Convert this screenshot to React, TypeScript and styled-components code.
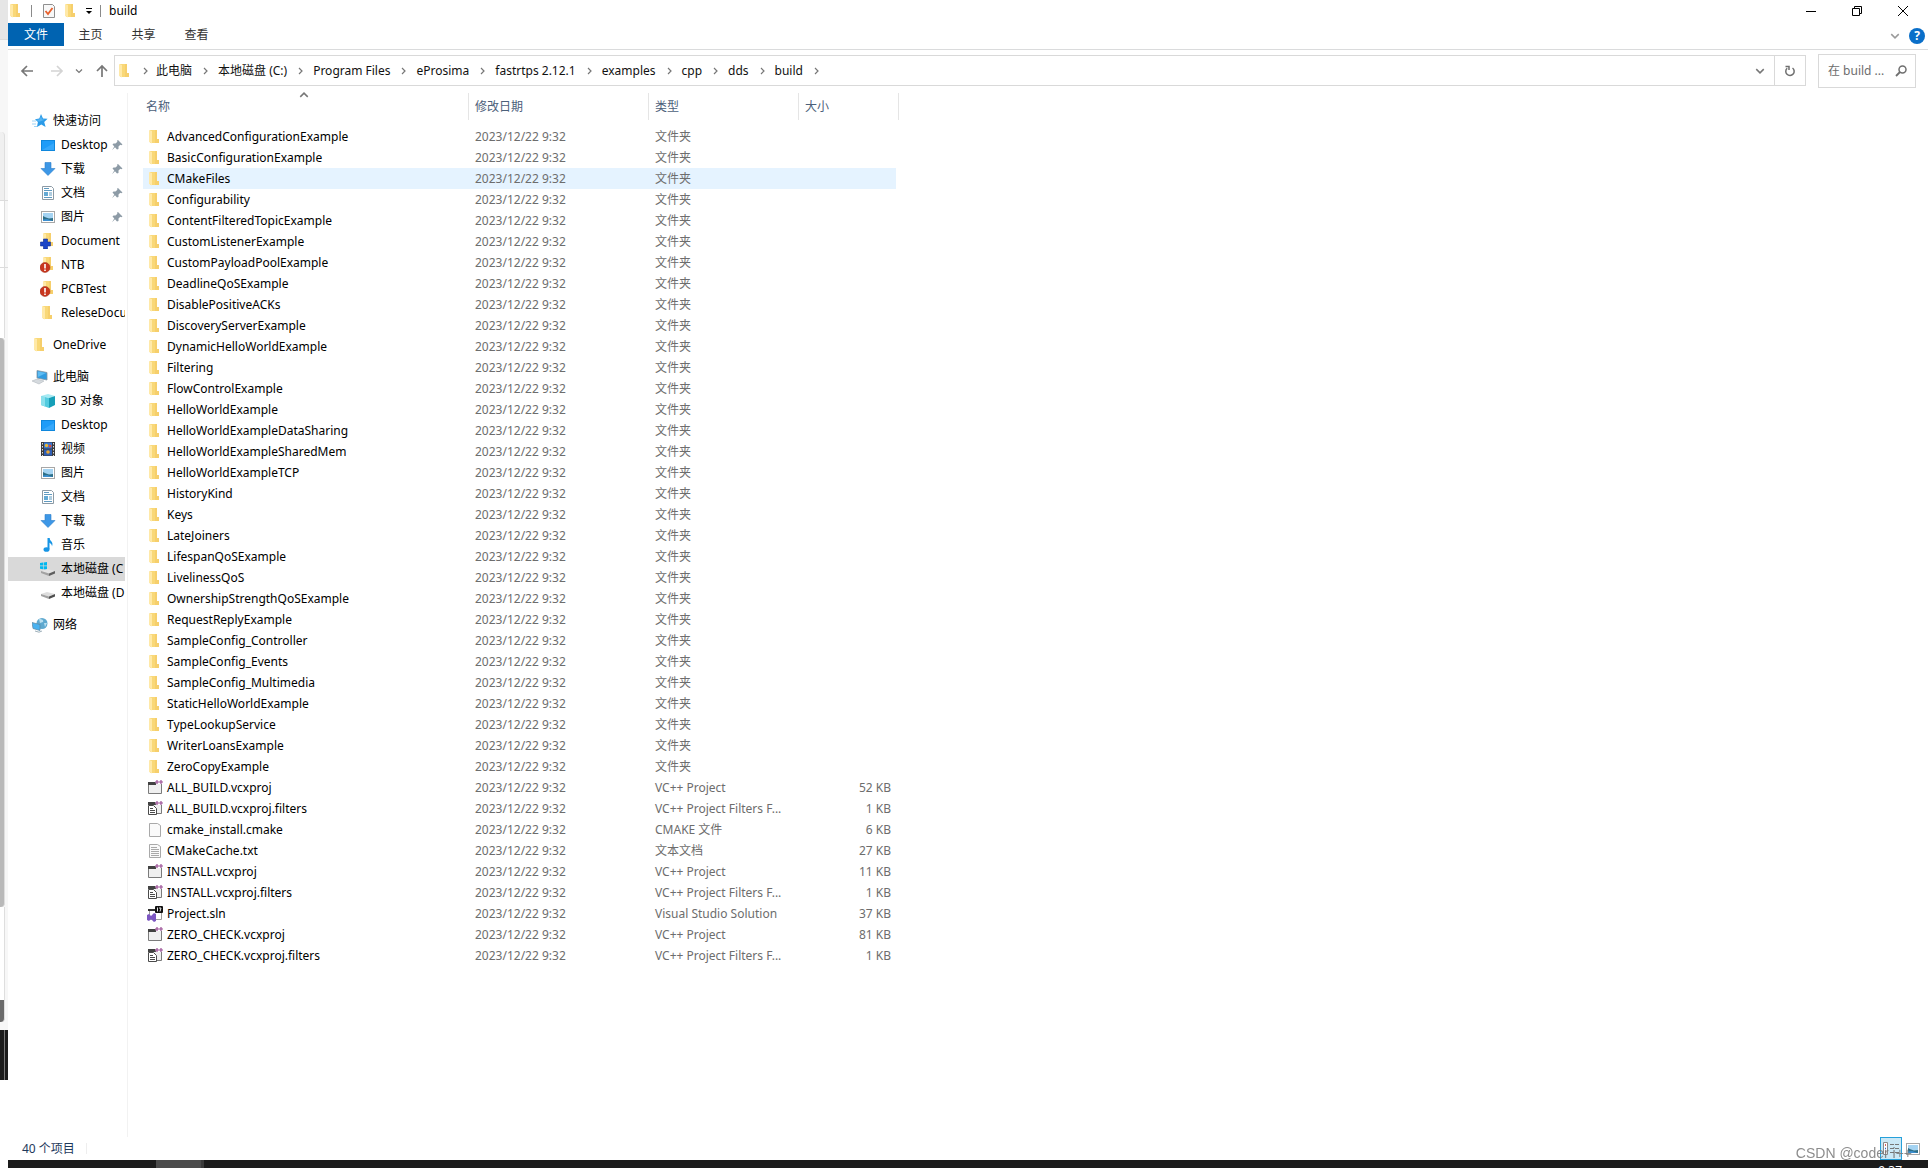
import React from "react";
import styled, { createGlobalStyle } from "styled-components";

const Global = createGlobalStyle`
  * { box-sizing: border-box; }
  body { margin: 0; background: #fff; }
  body, button, input, table {
    font-family: "Noto Sans", "Noto Sans CJK SC", sans-serif;
    font-size: 12px;
    line-height: 16px;
    font-variant-ligatures: none;
  }
  button { border: 0; padding: 0; background: none; color: inherit; }
  svg { display: block; flex: none; }
`;

/* ---------- icons ---------- */

type IconName =
  | "folder" | "star" | "desktop" | "download" | "docs" | "pictures" | "plusFolder"
  | "alertFolder" | "pc" | "cube" | "video" | "music" | "diskC" | "disk" | "network"
  | "vcx" | "filters" | "blank" | "text" | "sln" | "check";

const folderShape = (
  <>
    <path d="M3 1h7v9l2 1v3H3z" fill="#f9d878" />
    <path d="M8 1h2v9h2v4H8z" fill="#f6cf6c" />
    <path d="M2 1l3 1v12.500L2 13z" fill="#ffe9a8" />
  </>
);

const glyphs: Record<IconName, React.ReactNode> = {
  folder: folderShape,
  star: (
    <>
      <path d="M9 1l2 4.600 4.600.2-3.400 3.200 1.400 5L9.300 11.400 5 14l.9-4.900L3 6.200l4.300-.6z" fill="#2b9be8" />
      <path d="M9 3l1 3.300 3 .4-6 2-3-2 3.800-.5z" fill="#54b4f2" />
      <path d="M0 8h4M0 11h4M2 13.500h3" stroke="#9fd4f5" strokeWidth="1" />
    </>
  ),
  desktop: (
    <>
      <rect x="1" y="3" width="14" height="11" fill="#0f87dc" />
      <rect x="2" y="4" width="12" height="9" fill="#1e9cf8" />
      <path d="M2 13L14 6v7z" fill="#36a8fb" />
    </>
  ),
  download: <path d="M5 1.500h6v6h4l-7 7-7-7h4z" fill="#3d97e6" stroke="#2b7dc9" strokeWidth="0.6" />,
  docs: (
    <>
      <path d="M2.500 1.500h9l2 2v11h-11z" fill="#fff" stroke="#8c9aa5" />
      <path d="M4 3.500h5M4 5.500h8M9 8h3M9 10h3M4 12.500h8" stroke="#5f9ac0" />
      <rect x="4" y="7" width="4" height="4" fill="#63a9d4" />
    </>
  ),
  pictures: (
    <>
      <rect x="1.500" y="2.500" width="13" height="11" fill="#fff" stroke="#a7a7a7" />
      <rect x="3" y="4" width="10" height="8" fill="#a4d3f2" />
      <path d="M3 7l3 1.500 3 1 4-.5v3H3z" fill="#2e6f86" />
      <path d="M3 10.500l4-.5 6 2H3z" fill="#3c8fd0" />
    </>
  ),
  plusFolder: (
    <>
      <g transform="translate(1 -1)">{folderShape}</g>
      <path d="M3.500 6h4v3h3v4h-3v3h-4v-3h-3V9h3z" fill="#1c46c8" stroke="#0d2c94" strokeWidth="0.6" />
    </>
  ),
  alertFolder: (
    <>
      <g transform="translate(1 -1)">{folderShape}</g>
      <circle cx="5" cy="10.500" r="5" fill="#c9371f" stroke="#9c2a18" strokeWidth="0.5" />
      <path d="M5 7v4.500M5 12.500v1.500" stroke="#fff" strokeWidth="1.600" />
    </>
  ),
  pc: (
    <>
      <path d="M5 1.500l10 2v7.500L5 9z" fill="#2f9be0" stroke="#8796a1" strokeWidth="0.8" />
      <path d="M6 2.500l8 1.500-8 4z" fill="#5dbcf3" />
      <path d="M0 12l5-2 7 2-5 3z" fill="#d5dade" stroke="#a9b1b7" strokeWidth="0.5" />
    </>
  ),
  cube: (
    <>
      <path d="M1 3l7-2 7 2-6 2z" fill="#a6eaf3" />
      <path d="M1 3l8 2v10l-8-3z" fill="#52cbdf" />
      <path d="M9 5l6-2v9l-6 3z" fill="#169fb8" />
      <path d="M1 3l4 1v9.500L1 12z" fill="#8be0ec" />
    </>
  ),
  video: (
    <>
      <rect x="1" y="1" width="14" height="14" fill="#3b3b3b" />
      <path d="M2.500 2v13M13.500 2v13" stroke="#e0e0e0" strokeDasharray="1.500 1.500" />
      <rect x="4" y="1.500" width="8" height="6" fill="#3579d8" />
      <rect x="4" y="8.500" width="8" height="6" fill="#2f5fb5" />
      <circle cx="6.500" cy="4.500" r="1.700" fill="#e9b93a" />
      <circle cx="10" cy="5" r="1.500" fill="#d74b3b" />
      <circle cx="8" cy="11" r="1.800" fill="#e7a637" />
    </>
  ),
  music: (
    <>
      <path d="M8.500 1v11" stroke="#1795e5" strokeWidth="2" />
      <path d="M8 1h1.500c0 3 4.500 3.500 2.500 8.500 0-2-1.500-3.500-3.500-4z" fill="#1795e5" />
      <ellipse cx="6.500" cy="12.500" rx="3" ry="2.300" fill="#1795e5" />
    </>
  ),
  diskC: (
    <>
      <path d="M0 2l3-.4v3H0zM3.600 1.500L7 1v3.600H3.600zM0 5.200h3v3L0 7.800zM3.600 5.200H7v3.600l-3.400-.5z" fill="#00b7ef" />
      <path d="M1 10l6-2 8 2-6 2.500z" fill="#e3e3e3" />
      <path d="M1 10l8 2.500V15l-8-3z" fill="#a2a2a2" />
      <path d="M9 12.500l6-2.500v2.500L9 15z" fill="#5f5f5f" />
    </>
  ),
  disk: (
    <>
      <path d="M1 9l6-2 8 2-6 2.500z" fill="#dedede" />
      <path d="M1 9l8 2.500V14l-8-3z" fill="#a2a2a2" />
      <path d="M9 11.500L15 9v2.500L9 14z" fill="#4f4f4f" />
    </>
  ),
  network: (
    <>
      <circle cx="10" cy="6.500" r="5.500" fill="#5fa9cf" />
      <path d="M7 2c3 0 5 1 4 3l-3 1zM12 6l3 0-2 4z" fill="#b9dff0" />
      <path d="M0 5.500l8 2v6L1 11.500z" fill="#49b2f0" stroke="#5c87a2" strokeWidth="0.7" />
      <path d="M3 14l4 1.200 3-1.200" stroke="#9fb0ba" fill="none" />
    </>
  ),
  vcx: (
    <>
      <path d="M1.500 2.500h13v11h-13z" fill="#f0f0f0" stroke="#7b7b7b" />
      <path d="M1 2h8v3H1z" fill="#424242" />
      <path d="M8 0h8v4H9z" fill="#fff" />
      <path d="M8 2h4M10 0v4M12 2h4M14 0v4" stroke="#9b4f96" strokeWidth="1.200" />
    </>
  ),
  filters: (
    <>
      <path d="M4.500 2.500h10v10h-10z" fill="#f0f0f0" stroke="#7b7b7b" />
      <path d="M1 1h8v3H1z" fill="#424242" />
      <path d="M8 0h8v4H9z" fill="#fff" />
      <path d="M8 2h4M10 0v4M12 2h4M14 0v4" stroke="#9b4f96" strokeWidth="1.200" />
      <path d="M1.500 4.500h5l3 3v6h-8z" fill="#fff" stroke="#4b4b4b" />
      <path d="M3 7.500h3M3 9.500h5M3 11.500h5" stroke="#4b4b4b" />
    </>
  ),
  blank: <path d="M2.500 1.500h8l3 2v11h-11z" fill="#fafafa" stroke="#a9a9a9" />,
  text: (
    <>
      <path d="M2.500 1.500h8l3 2v11h-11z" fill="#fafafa" stroke="#a9a9a9" />
      <path d="M4 4.500h6M4 6.500h8M4 8.500h8M4 10.500h8M4 12.500h8" stroke="#a9a9a9" />
    </>
  ),
  sln: (
    <>
      <path d="M2.500 3.500h12v10h-12z" fill="#fff" stroke="#9d9d9d" />
      <path d="M1 3h7v2H1z" fill="#333" />
      <rect x="8" y="0" width="8" height="7" rx="1" fill="#111" />
      <path d="M10.500 1.500v4M12 2h2l-1 3.500" stroke="#fff" fill="none" strokeWidth="0.9" />
      <path d="M0 9l2-1 2 2 3-3 2 1v7l-2 1-3-3-2 2-2-1z" fill="#7d57c2" />
    </>
  ),
  check: (
    <>
      <path d="M2.500 1.500h9l2 2v11h-11z" fill="#f8f8f8" stroke="#8f8f8f" />
      <path d="M4.500 8l2.500 3 4.500-6" stroke="#e8602c" strokeWidth="1.800" fill="none" />
    </>
  ),
};

const Icon = ({ name }: { name: IconName }) => (
  <svg width="16" height="16" viewBox="0 0 16 16" aria-hidden="true">{glyphs[name]}</svg>
);

const Chevron = ({ dir, color = "#777", size = 8 }: { dir: "right" | "down" | "up"; color?: string; size?: number }) => {
  const d = { right: "M3 1l3 3-3 3", down: "M1 2.500l3 3 3-3", up: "M1 5.500l3-3 3 3" }[dir];
  return (
    <svg width={size} height={size} viewBox="0 0 8 8" aria-hidden="true">
      <path d={d} stroke={color} strokeWidth="1.200" fill="none" />
    </svg>
  );
};

const Pin = () => (
  <svg width="12" height="12" viewBox="0 0 12 12" aria-hidden="true">
    <path d="M7 1l4.500 4.500-1.200.7-1-.4L7.500 7.500V10L6 10.500 4 8.200 1 11.200 3.300 7.500 1.500 5.500 2.500 4.500h2L6.400 2.700 6 1.800z" fill="#8d9ba6" />
  </svg>
);

/* ---------- desktop shell ---------- */

const Screen = styled.div`
  display: grid;
  grid-template-columns: 8px minmax(0, 1fr);
  min-height: 100vh;
`;

const Behind = styled.div`
  display: flex;
  flex-direction: column;
  background: #fff;
`;

const Slab = styled.div<{ $h: number; $bg: string; $inner?: string; $edge?: string; $top?: boolean; $radius?: string }>`
  height: ${p => p.$h}px;
  background: ${p => p.$bg};
  border-top: ${p => (p.$top ? "1px solid #dcdcdc" : "0")};
  &::before {
    content: "";
    display: ${p => (p.$inner ? "block" : "none")};
    width: 4px;
    height: 100%;
    background: ${p => p.$inner};
    border-right: 1px solid ${p => p.$edge ?? "#dedede"};
    border-radius: ${p => p.$radius ?? "0"};
  }
`;

const Window = styled.main`
  display: flex;
  flex-direction: column;
  min-width: 0;
  background: #fff;
`;

/* ---------- title and ribbon ---------- */

const TitleBar = styled.header`
  display: flex;
  align-items: center;
  height: 23px;
  padding-bottom: 2px;
`;

const QuickTools = styled.div`
  display: flex;
  align-items: center;
  gap: 6px;
`;

const Rule = styled.span`
  width: 1px;
  height: 12px;
  margin: 0 3px 0 1px;
  background: #8a8a8a;
`;

const WindowTitle = styled.h1`
  margin: 0 0 0 5px;
  font-size: 12px;
  font-weight: 400;
  color: #000;
`;

const Caption = styled.div`
  display: flex;
  margin-left: auto;
  padding-right: 2px;
`;

const CaptionButton = styled.button`
  display: flex;
  align-items: center;
  justify-content: center;
  width: 46px;
  height: 20px;
`;

const Ribbon = styled.nav`
  display: flex;
  align-items: flex-start;
  height: 27px;
  border-bottom: 1px solid #dadbdc;
`;

const Tab = styled.button<{ $file?: boolean }>`
  width: ${p => (p.$file ? 56 : 53)}px;
  height: 23px;
  background: ${p => (p.$file ? "#0063b1" : "transparent")};
  color: ${p => (p.$file ? "#fff" : "#333")};
`;

const RibbonEnd = styled.div`
  display: flex;
  align-items: center;
  gap: 9px;
  height: 26px;
  margin-left: auto;
  padding-right: 3px;
`;

const Help = styled.button`
  width: 16px;
  height: 16px;
  border-radius: 8px;
  background: #0a6fc9;
  color: #fff;
  font-weight: 700;
`;

/* ---------- address row ---------- */

const AddressRow = styled.div`
  display: flex;
  align-items: center;
  height: 43px;
  padding: 0 12px 2px 0;
`;

const History = styled.div`
  display: grid;
  grid-template-columns: 38px 22px 22px 24px;
  justify-items: center;
  align-items: center;
`;

const AddressBox = styled.div`
  display: flex;
  flex: 1;
  align-items: center;
  min-width: 0;
  height: 31px;
  padding-left: 2px;
  border: 1px solid #d9d9d9;
`;

const Crumbs = styled.ol`
  display: flex;
  flex: 1;
  align-items: center;
  min-width: 0;
  margin: 0;
  padding: 0;
  list-style: none;
`;

const Crumb = styled.li`
  display: flex;
  align-items: center;
  white-space: nowrap;
`;

const Gap = styled.span<{ $first?: boolean }>`
  display: flex;
  justify-content: center;
  width: ${p => (p.$first ? 23 : 26)}px;
`;

const CrumbLink = styled.a`
  color: #111;
  text-decoration: none;
`;

const BoxButton = styled.button<{ $line?: boolean }>`
  display: flex;
  align-items: center;
  justify-content: center;
  width: ${p => (p.$line ? 31 : 29)}px;
  height: 29px;
  border-left: ${p => (p.$line ? "1px solid #d9d9d9" : "0")};
`;

const Search = styled.label`
  display: flex;
  align-items: center;
  width: 98px;
  height: 34px;
  margin-left: 12px;
  padding: 0 8px 0 9px;
  border: 1px solid #d9d9d9;
`;

const SearchInput = styled.input`
  flex: 1;
  min-width: 0;
  padding: 0;
  border: 0;
  outline: 0;
  background: none;
  &::placeholder { color: #6d6d6d; opacity: 1; }
`;

/* ---------- navigation pane ---------- */

const Body = styled.div`
  display: flex;
  flex: 1;
`;

const Pane = styled.nav`
  display: flex;
  flex-direction: column;
  gap: 8px;
  width: 120px;
  padding: 16px 2px 0 0;
  border-right: 1px solid #f2f2f2;
`;

const Group = styled.ul`
  margin: 0;
  padding: 0;
  list-style: none;
`;

const NavItem = styled.a<{ $child?: boolean; $on?: boolean }>`
  display: flex;
  align-items: center;
  gap: 5px;
  height: 24px;
  padding-left: ${p => (p.$child ? 32 : 24)}px;
  overflow: hidden;
  white-space: nowrap;
  color: #000;
  text-decoration: none;
  background: ${p => (p.$on ? "#d9d9d9" : "transparent")};
`;

const NavText = styled.span<{ $pinned?: boolean }>`
  width: ${p => (p.$pinned ? "45px" : "auto")};
`;

/* ---------- file list ---------- */

const Files = styled.table`
  align-self: flex-start;
  width: 756px;
  margin-left: 15px;
  table-layout: fixed;
  border-collapse: separate;
  border-spacing: 0;
`;

const HeadCell = styled.th<{ $w: number; $first?: boolean }>`
  position: relative;
  width: ${p => p.$w}px;
  padding: 0 0 6px;
  text-align: left;
  font-weight: 400;
  color: #4c607a;
  > span {
    display: flex;
    align-items: center;
    height: 27px;
    padding-left: ${p => (p.$first ? 3 : 6)}px;
    border-right: 1px solid #e5e5e5;
  }
`;

const SortMark = styled.i`
  position: absolute;
  top: -3px;
  left: 0;
  right: 4px;
  display: flex;
  justify-content: center;
`;

const Row = styled.tr<{ $hover?: boolean }>`
  height: 21px;
  > td { background-color: ${p => (p.$hover ? "#e5f3ff" : "transparent")}; }
`;

const Cell = styled.td<{ $end?: boolean }>`
  padding: 0 ${p => (p.$end ? 5 : 6)}px 0 6px;
  overflow: hidden;
  white-space: nowrap;
  text-overflow: ellipsis;
  text-align: ${p => (p.$end ? "right" : "left")};
  border-right: ${p => (p.$end ? "3px solid transparent" : "0")};
  background-clip: padding-box;
  color: #6d6d6d;
`;

const NameCell = styled(Cell)`
  padding: 0 4px;
  color: #000;
  > div { display: flex; align-items: center; gap: 4px; }
`;

/* ---------- status and task bars ---------- */

const Status = styled.footer`
  display: flex;
  align-items: center;
  height: 23px;
  padding: 0 7px 0 14px;
  color: #1e395b;
`;

const StatusRule = styled.span`
  width: 1px;
  height: 11px;
  margin-left: 11px;
  background: #eee;
`;

const Views = styled.div`
  display: flex;
  align-items: center;
  gap: 3px;
  margin-left: auto;
`;

const ViewButton = styled.button<{ $on?: boolean }>`
  display: flex;
  align-items: center;
  justify-content: center;
  width: ${p => (p.$on ? 22 : 16)}px;
  height: 23px;
  border: ${p => (p.$on ? "1px solid #26a0da" : "0")};
  background: ${p => (p.$on ? "#cbe8f6" : "transparent")};
`;

const Taskbar = styled.div`
  display: flex;
  height: 8px;
  overflow: hidden;
  background: #1c1c1c;
  color: #fff;
`;

const TaskButton = styled.div`
  width: 48px;
  margin-left: 148px;
  background: #4b4b4b;
  border-right: 3px solid #3a3a3a;
`;

const Clock = styled.time`
  margin: 3px 26px 0 auto;
`;

const Watermark = styled.div`
  position: fixed;
  right: 16px;
  bottom: 7px;
  font: 14px/16px "Liberation Sans", sans-serif;
  color: rgba(120, 120, 120, 0.85);
`;

/* ---------- data ---------- */

type Nav = { icon: IconName; text: string; pin?: boolean; on?: boolean };

const groups: Nav[][] = [
  [
    { icon: "star", text: "快速访问" },
    { icon: "desktop", text: "Desktop", pin: true },
    { icon: "download", text: "下载", pin: true },
    { icon: "docs", text: "文档", pin: true },
    { icon: "pictures", text: "图片", pin: true },
    { icon: "plusFolder", text: "Document" },
    { icon: "alertFolder", text: "NTB" },
    { icon: "alertFolder", text: "PCBTest" },
    { icon: "folder", text: "ReleseDocu" },
  ],
  [{ icon: "folder", text: "OneDrive" }],
  [
    { icon: "pc", text: "此电脑" },
    { icon: "cube", text: "3D 对象" },
    { icon: "desktop", text: "Desktop" },
    { icon: "video", text: "视频" },
    { icon: "pictures", text: "图片" },
    { icon: "docs", text: "文档" },
    { icon: "download", text: "下载" },
    { icon: "music", text: "音乐" },
    { icon: "diskC", text: "本地磁盘 (C", on: true },
    { icon: "disk", text: "本地磁盘 (D" },
  ],
  [{ icon: "network", text: "网络" }],
];

const crumbs = ["此电脑", "本地磁盘 (C:)", "Program Files", "eProsima", "fastrtps 2.12.1", "examples", "cpp", "dds", "build"];

const folders = [
  "AdvancedConfigurationExample", "BasicConfigurationExample", "CMakeFiles", "Configurability",
  "ContentFilteredTopicExample", "CustomListenerExample", "CustomPayloadPoolExample", "DeadlineQoSExample",
  "DisablePositiveACKs", "DiscoveryServerExample", "DynamicHelloWorldExample", "Filtering",
  "FlowControlExample", "HelloWorldExample", "HelloWorldExampleDataSharing", "HelloWorldExampleSharedMem",
  "HelloWorldExampleTCP", "HistoryKind", "Keys", "LateJoiners", "LifespanQoSExample", "LivelinessQoS",
  "OwnershipStrengthQoSExample", "RequestReplyExample", "SampleConfig_Controller", "SampleConfig_Events",
  "SampleConfig_Multimedia", "StaticHelloWorldExample", "TypeLookupService", "WriterLoansExample", "ZeroCopyExample",
];

type File = { icon: IconName; name: string; type: string; size: string };

const files: File[] = [
  ...folders.map(name => ({ icon: "folder" as IconName, name, type: "文件夹", size: "" })),
  { icon: "vcx", name: "ALL_BUILD.vcxproj", type: "VC++ Project", size: "52 KB" },
  { icon: "filters", name: "ALL_BUILD.vcxproj.filters", type: "VC++ Project Filters F...", size: "1 KB" },
  { icon: "blank", name: "cmake_install.cmake", type: "CMAKE 文件", size: "6 KB" },
  { icon: "text", name: "CMakeCache.txt", type: "文本文档", size: "27 KB" },
  { icon: "vcx", name: "INSTALL.vcxproj", type: "VC++ Project", size: "11 KB" },
  { icon: "filters", name: "INSTALL.vcxproj.filters", type: "VC++ Project Filters F...", size: "1 KB" },
  { icon: "sln", name: "Project.sln", type: "Visual Studio Solution", size: "37 KB" },
  { icon: "vcx", name: "ZERO_CHECK.vcxproj", type: "VC++ Project", size: "81 KB" },
  { icon: "filters", name: "ZERO_CHECK.vcxproj.filters", type: "VC++ Project Filters F...", size: "1 KB" },
];

const Arrow = ({ d, color }: { d: string; color: string }) => (
  <svg width="14" height="14" viewBox="0 0 14 14" aria-hidden="true">
    <path d={d} stroke={color} strokeWidth="1.700" fill="none" />
  </svg>
);

export default function App() {
  return (
    <Screen>
      <Global />
      <Behind aria-hidden="true">
        <Slab $h={39} $bg="#e6e6e6" />
        <Slab $h={93} $bg="#f7f7f7" $top />
        <Slab $h={68} $bg="#f7f7f7" $inner="#f0f0f0" $radius="0 4px 0 0" />
        <Slab $h={67} $bg="#f7f7f7" $inner="#ffffff" $top />
        <Slab $h={71} $bg="#f7f7f7" $inner="#ffffff" $top />
        <Slab $h={569} $bg="#f7f7f7" $inner="#b9b9b9" $radius="0 4px 4px 0" />
        <Slab $h={93} $bg="#f7f7f7" $inner="#ffffff" />
        <Slab $h={22} $bg="#f7f7f7" $inner="#6a6a6a" $radius="0 0 4px 0" />
        <Slab $h={8} $bg="#f7f7f7" />
        <Slab $h={50} $bg="#1c1c1c" $inner="#1c1c1c" $edge="#777777" />
      </Behind>
      <Window>
        <TitleBar>
          <QuickTools>
            <Icon name="folder" />
            <Rule />
            <Icon name="check" />
            <Icon name="folder" />
            <svg width="8" height="8" viewBox="0 0 8 8" aria-hidden="true">
              <path d="M1 1.500h6" stroke="#000" />
              <path d="M1 4h6L4 7z" fill="#000" />
            </svg>
            <Rule />
          </QuickTools>
          <WindowTitle>build</WindowTitle>
          <Caption>
            <CaptionButton aria-label="Minimize">
              <svg width="10" height="10"><path d="M0 5.500h10" stroke="#000" /></svg>
            </CaptionButton>
            <CaptionButton aria-label="Restore">
              <svg width="10" height="10"><path d="M.5 2.500h7v7h-7zM2.500 2.500v-2h7v7h-2" stroke="#000" fill="none" /></svg>
            </CaptionButton>
            <CaptionButton aria-label="Close">
              <svg width="10" height="10"><path d="M0 0l10 10M10 0L0 10" stroke="#000" /></svg>
            </CaptionButton>
          </Caption>
        </TitleBar>
        <Ribbon>
          <Tab $file>文件</Tab>
          <Tab>主页</Tab>
          <Tab>共享</Tab>
          <Tab>查看</Tab>
          <RibbonEnd>
            <Chevron dir="down" color="#9a9a9a" size={10} />
            <Help aria-label="Help">?</Help>
          </RibbonEnd>
        </Ribbon>
        <AddressRow>
          <History>
            <button aria-label="Back"><Arrow d="M13 7H2M7 2L2 7l5 5" color="#777" /></button>
            <button aria-label="Forward"><Arrow d="M1 7h11M7 2l5 5-5 5" color="#d4d4d4" /></button>
            <button aria-label="Recent"><Chevron dir="down" /></button>
            <button aria-label="Up"><Arrow d="M7 13V2M2 7l5-5 5 5" color="#777" /></button>
          </History>
          <AddressBox>
            <Icon name="folder" />
            <Crumbs>
              <Crumb><Gap $first><Chevron dir="right" /></Gap></Crumb>
              {crumbs.map(c => (
                <Crumb key={c}>
                  <CrumbLink href="#">{c}</CrumbLink>
                  <Gap><Chevron dir="right" /></Gap>
                </Crumb>
              ))}
            </Crumbs>
            <BoxButton aria-label="Previous locations"><Chevron dir="down" size={10} /></BoxButton>
            <BoxButton $line aria-label="Refresh">
              <svg width="12" height="12" viewBox="0 0 12 12">
                <path d="M8.500 3A4.200 4.200 0 1 1 3.200 3.200M1.500 1.500H5v3.500" stroke="#6f6f6f" strokeWidth="1.500" fill="none" />
              </svg>
            </BoxButton>
          </AddressBox>
          <Search>
            <SearchInput placeholder="在 build ..." aria-label="Search" />
            <svg width="12" height="12" viewBox="0 0 12 12" aria-hidden="true">
              <circle cx="7.500" cy="4.500" r="3.500" stroke="#6f6f6f" strokeWidth="1.500" fill="none" />
              <path d="M5 7l-4 4" stroke="#6f6f6f" strokeWidth="1.800" />
            </svg>
          </Search>
        </AddressRow>
        <Body>
          <Pane>
            {groups.map((g, gi) => (
              <Group key={gi}>
                {g.map((n, i) => (
                  <li key={i}>
                    <NavItem href="#" $child={i > 0} $on={n.on}>
                      <Icon name={n.icon} />
                      <NavText $pinned={n.pin}>{n.text}</NavText>
                      {n.pin && <Pin />}
                    </NavItem>
                  </li>
                ))}
              </Group>
            ))}
          </Pane>
          <Files>
            <thead>
              <tr>
                <HeadCell $w={326} $first>
                  <SortMark><Chevron dir="up" size={10} /></SortMark>
                  <span>名称</span>
                </HeadCell>
                <HeadCell $w={180}><span>修改日期</span></HeadCell>
                <HeadCell $w={150}><span>类型</span></HeadCell>
                <HeadCell $w={100}><span>大小</span></HeadCell>
              </tr>
            </thead>
            <tbody>
              {files.map(f => (
                <Row key={f.name} $hover={f.name === "CMakeFiles"}>
                  <NameCell><div><Icon name={f.icon} />{f.name}</div></NameCell>
                  <Cell>2023/12/22 9:32</Cell>
                  <Cell>{f.type}</Cell>
                  <Cell $end>{f.size}</Cell>
                </Row>
              ))}
            </tbody>
          </Files>
        </Body>
        <Status>
          40 个项目
          <StatusRule />
          <Views>
            <ViewButton $on aria-label="Details">
              <svg width="16" height="13" viewBox="0 0 16 13">
                <path d="M.5.5h4v12h-4z" fill="#fff" stroke="#8a8a8a" />
                <path d="M2 3h1M2 10h1" stroke="#c33" strokeWidth="1.500" />
                <path d="M2 6.500h1" stroke="#36c" strokeWidth="1.500" />
                <path d="M7 2.500h4M12 2.500h4M7 6.500h4M12 6.500h4M7 10.500h4M12 10.500h4" stroke="#777" />
              </svg>
            </ViewButton>
            <ViewButton aria-label="Large icons"><Icon name="pictures" /></ViewButton>
          </Views>
        </Status>
        <Taskbar>
          <TaskButton />
          <Clock>9:37</Clock>
        </Taskbar>
      </Window>
      <Watermark>CSDN @coder i++</Watermark>
    </Screen>
  );
}
